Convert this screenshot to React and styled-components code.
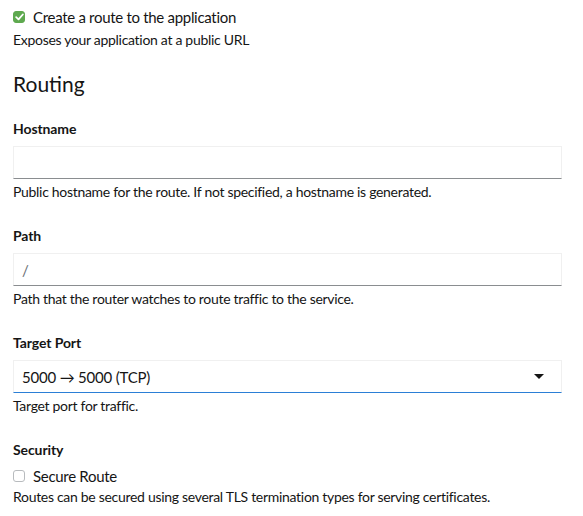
import React from "react";
import styled, { createGlobalStyle } from "styled-components";

const GlobalStyle = createGlobalStyle`
  html, body {
    margin: 0;
    padding: 0;
    background: #ffffff;
  }
  body {
    font-family: Lato, "Noto Sans", sans-serif;
    color: #151515;
  }
`;

const Page = styled.div`
  width: 583px;
  padding: 6px 21px 0 13px;
  box-sizing: border-box;
  display: flex;
  flex-direction: column;
`;

const CheckRow = styled.label`
  display: flex;
  align-items: center;
  gap: 8px;
  font-size: 15px;
  letter-spacing: -0.3px;
  line-height: 22px;
  color: #151515;
  margin-top: ${(p) => p.$top || 0}px;
`;

const Box = styled.span`
  width: 12px;
  height: 12px;
  box-sizing: border-box;
  border-radius: 3px;
  flex: none;
  display: flex;
  align-items: center;
  justify-content: center;
  background: ${(p) => (p.$checked ? "#5ea94f" : "#ffffff")};
  border: 1px solid ${(p) => (p.$checked ? "#5ea94f" : "#b8bbbe")};
`;

const Helper = styled.div`
  font-size: 14px;
  letter-spacing: -0.3px;
  line-height: 20px;
  color: #151515;
  margin-top: ${(p) => p.$top || 0}px;
`;

const Heading = styled.h2`
  margin: 19px 0 0;
  font-size: 21px;
  font-weight: 400;
  line-height: 30px;
  color: #151515;
`;

const Field = styled.div`
  display: flex;
  flex-direction: column;
  margin-top: ${(p) => p.$top}px;
`;

const Label = styled.div`
  font-size: 14px;
  font-weight: 700;
  letter-spacing: -0.1px;
  line-height: 20px;
  margin-bottom: 7px;
`;

const Input = styled.div`
  height: 33px;
  box-sizing: border-box;
  border: 1px solid #f0f0f0;
  border-bottom: 1px solid ${(p) => (p.$focus ? "#2b7fd6" : "#8a8d90")};
  display: flex;
  align-items: center;
  justify-content: space-between;
  padding: 0 17px 0 8px;
  font-size: 15px;
  letter-spacing: -0.2px;
  color: ${(p) => (p.$muted ? "#6a6e73" : "#151515")};
  margin-bottom: 3px;
`;

const Caret = styled.span`
  width: 0;
  height: 0;
  border-left: 5px solid transparent;
  border-right: 5px solid transparent;
  border-top: 5px solid #151515;
`;

const Check = () => (
  <svg width="9" height="8" viewBox="0 0 9 8">
    <path d="M1.2 4.2 L3.5 6.4 L7.8 1.5" fill="none" stroke="#fff" strokeWidth="1.8" strokeLinecap="round" strokeLinejoin="round" />
  </svg>
);

export default function App() {
  return (
    <>
      <GlobalStyle />
      <Page>
        <CheckRow>
          <Box $checked>
            <Check />
          </Box>
          Create a route to the application
        </CheckRow>
        <Helper $top={2}>Exposes your application at a public URL</Helper>

        <Heading>Routing</Heading>

        <Field $top={20}>
          <Label>Hostname</Label>
          <Input />
          <Helper>Public hostname for the route. If not specified, a hostname is generated.</Helper>
        </Field>

        <Field $top={24}>
          <Label>Path</Label>
          <Input $muted>/</Input>
          <Helper>Path that the router watches to route traffic to the service.</Helper>
        </Field>

        <Field $top={24}>
          <Label>Target Port</Label>
          <Input $focus>
            5000 → 5000 (TCP)
            <Caret />
          </Input>
          <Helper>Target port for traffic.</Helper>
        </Field>

        <Field $top={24}>
          <Label>Security</Label>
          <CheckRow $top={-2}>
            <Box />
            Secure Route
          </CheckRow>
          <Helper>Routes can be secured using several TLS termination types for serving certificates.</Helper>
        </Field>
      </Page>
    </>
  );
}
